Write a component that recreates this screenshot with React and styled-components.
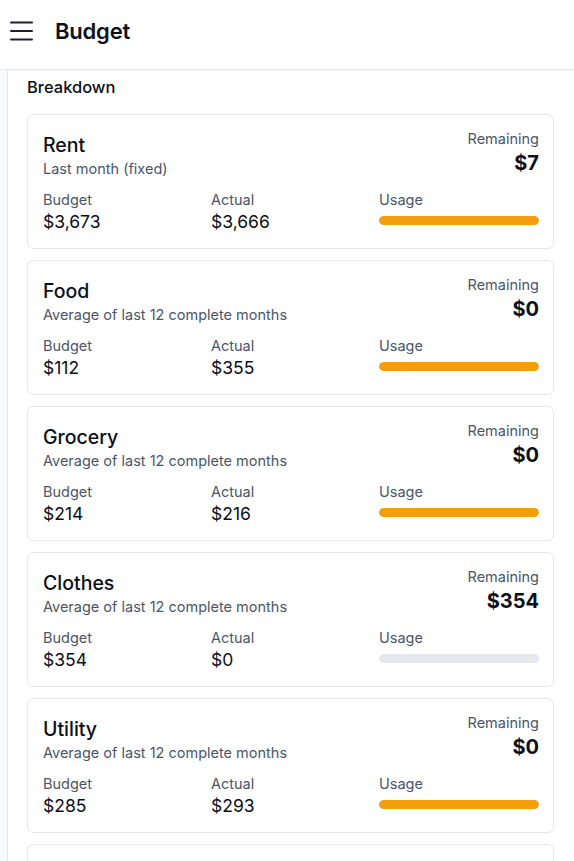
import React from 'react';
import styled, { createGlobalStyle } from 'styled-components';

const GlobalStyle = createGlobalStyle`
    * { box-sizing: border-box; }
    body {
        margin: 0;
        font-family: Inter, "Noto Sans", "Liberation Sans", sans-serif;
        color: #0b0f19;
        background: #fff;
    }
`;

const Header = styled.header`
    height: 70px;
    display: flex;
    align-items: center;
    gap: 22px;
    padding: 0 10px 8px;
    border-bottom: 1px solid #e5e7eb;
    box-shadow: 0 1px 2px rgba(0, 0, 0, .04);
`;

const MenuButton = styled.button`
    width: 23px;
    height: 22px;
    padding: 0;
    border: none;
    background: none;
    color: #1a2130;
    display: flex;
    align-items: center;
    justify-content: center;
`;

const Title = styled.h1`
    margin: 0;
    font-size: 22px;
    font-weight: 600;
    letter-spacing: -0.2px;
    color: #0b1020;
`;

const Body = styled.div`
    display: flex;
    min-height: calc(100vh - 70px);
`;

const Rail = styled.div`
    width: 8px;
    flex-shrink: 0;
    background: #f8f9fb;
    border-right: 1px solid #e5e7eb;
`;

const Main = styled.main`
    flex: 1;
    padding: 6px 20px 0 19px;
`;

const SectionTitle = styled.h2`
    margin: 0 0 16px;
    font-size: 16.5px;
    font-weight: 500;
    line-height: 22px;
    color: #0b0f19;
`;

const List = styled.div`
    display: flex;
    flex-direction: column;
    gap: 11px;
`;

const Card = styled.div`
    border: 1px solid #e5e7eb;
    border-radius: 6px;
    padding: 16px 14px 14px 15px;
    background: #fff;
`;

const TopRow = styled.div`
    display: flex;
    justify-content: space-between;
    align-items: flex-start;
`;

const Name = styled.div`
    font-size: 19.5px;
    font-weight: 500;
    line-height: 28px;
    color: #0b0f19;
`;

const Muted = styled.div`
    font-size: 14.5px;
    line-height: 20px;
    color: #4b5668;
`;

const Right = styled.div`
    text-align: right;
    margin-top: -2px;
`;

const Remaining = styled.div`
    font-size: 20px;
    font-weight: 700;
    line-height: 28px;
    color: #0b0f19;
`;

const Stats = styled.div`
    display: grid;
    grid-template-columns: repeat(3, 1fr);
    gap: 8px;
    margin-top: 11px;
`;

const Value = styled.div`
    font-size: 17.5px;
    line-height: 24px;
    color: #0b0f19;
`;

const Track = styled.div`
    margin-top: 6px;
    height: 9px;
    border-radius: 5px;
    background: #e5e8ee;
    overflow: hidden;
`;

const Fill = styled.div`
    height: 100%;
    border-radius: 5px;
    background: #f59e0b;
`;

const items = [
    { name: 'Rent', basis: 'Last month (fixed)', budget: 3673, actual: 3666 },
    { name: 'Food', basis: 'Average of last 12 complete months', budget: 112, actual: 355 },
    { name: 'Grocery', basis: 'Average of last 12 complete months', budget: 214, actual: 216 },
    { name: 'Clothes', basis: 'Average of last 12 complete months', budget: 354, actual: 0 },
    { name: 'Utility', basis: 'Average of last 12 complete months', budget: 285, actual: 293 },
    { name: 'Transport', basis: 'Average of last 12 complete months', budget: 120, actual: 80 },
];

const money = (n) => '$' + n.toLocaleString('en-US');

const BudgetItem = ({ item }) => {
    const remaining = Math.max(item.budget - item.actual, 0);
    const pct = Math.min(item.actual / item.budget, 1) * 100;
    return (
        <Card>
            <TopRow>
                <div>
                    <Name>{item.name}</Name>
                    <Muted>{item.basis}</Muted>
                </div>
                <Right>
                    <Muted>Remaining</Muted>
                    <Remaining>{money(remaining)}</Remaining>
                </Right>
            </TopRow>
            <Stats>
                <div>
                    <Muted>Budget</Muted>
                    <Value>{money(item.budget)}</Value>
                </div>
                <div>
                    <Muted>Actual</Muted>
                    <Value>{money(item.actual)}</Value>
                </div>
                <div>
                    <Muted>Usage</Muted>
                    <Track>
                        {pct > 0 && <Fill style={{ width: pct + '%' }} />}
                    </Track>
                </div>
            </Stats>
        </Card>
    );
};

const App = () => (
    <>
        <GlobalStyle />
        <Header>
            <MenuButton aria-label="Menu">
                <svg width="23" height="22" viewBox="0 0 23 22" fill="none" stroke="currentColor" strokeWidth="2" strokeLinecap="round">
                    <line x1="1" y1="2.5" x2="22" y2="2.5" />
                    <line x1="1" y1="11" x2="22" y2="11" />
                    <line x1="1" y1="19.5" x2="22" y2="19.5" />
                </svg>
            </MenuButton>
            <Title>Budget</Title>
        </Header>
        <Body>
            <Rail />
            <Main>
                <SectionTitle>Breakdown</SectionTitle>
                <List>
                    {items.map((item) => (
                        <BudgetItem key={item.name} item={item} />
                    ))}
                </List>
            </Main>
        </Body>
    </>
);

export default App;
